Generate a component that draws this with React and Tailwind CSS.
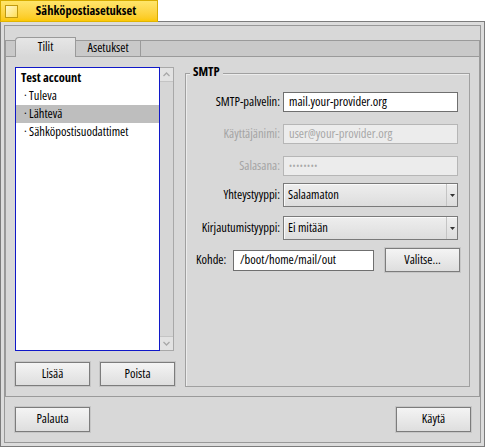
import React from "react";

function Button({ children, className = "" }) {
  return (
    <div
      className={`flex items-center justify-center h-[24px] w-[75px] border border-[#7c7c7c] bg-gradient-to-b from-[#f4f4f4] to-[#dedede] shadow-[0_0_0_1px_#c6c6c6] ${className}`}
    >
      {children}
    </div>
  );
}

function Field({ label, value, disabled, password }) {
  return (
    <div className="flex items-center h-[20px]">
      <div className={`w-[95px] pr-[1px] text-right ${disabled ? "text-[#a4a4a4]" : ""}`}>{label}</div>
      <div
        className={`ml-[2px] w-[175px] h-[20px] flex items-center pl-[5px] border ${
          disabled ? "border-[#b6b6b6] bg-[#ececec] text-[#a8a8a8]" : "border-[#6f6f6f] bg-white"
        }`}
      >
        {password ? <span className="text-[8px] tracking-[0.6px]">••••••••</span> : value}
      </div>
    </div>
  );
}

function Menu({ label, value }) {
  return (
    <div className="flex items-center h-[24px]">
      <div className="w-[95px] pr-[1px] text-right">{label}</div>
      <div className="ml-[2px] w-[175px] h-[24px] flex border border-[#7a7a7a] bg-gradient-to-b from-[#eeeeee] to-[#dddddd] shadow-[inset_1px_1px_0_#fafafa]">
        <div className="flex-1 flex items-center pl-[4px]">{value}</div>
        <div className="w-[11px] flex items-center justify-center border-l border-[#c4c4c4]">
          <svg width="5" height="3" viewBox="0 0 5 3">
            <path d="M0 0H5L2.5 3Z" fill="#333" />
          </svg>
        </div>
      </div>
    </div>
  );
}

function Chevron({ up }) {
  return (
    <svg width="7" height="5" viewBox="0 0 7 5">
      <path d={up ? "M0.5 4L3.5 1L6.5 4" : "M0.5 1L3.5 4L6.5 1"} stroke="#a8a8a8" strokeWidth="1.3" fill="none" />
    </svg>
  );
}

const items = [
  { text: "Test account", bold: true },
  { text: "· Tuleva" },
  { text: "· Lähtevä", selected: true },
  { text: "· Sähköpostisuodattimet" },
];

export default function App() {
  return (
    <div className="w-[485px] h-[447px] bg-white font-['Open_Sans',sans-serif] font-stretch-[75%] text-[12.5px] text-black leading-none">
      {/* title tab */}
      <div className="w-[158px] h-[21px] flex items-center border-l border-t border-r border-[#d8ac00] bg-gradient-to-b from-[#ffe66a] to-[#fcc800]">
        <div className="ml-[4px] w-[13px] h-[13px] border border-[#c09a10] bg-gradient-to-br from-[#fff8c8] to-[#ffde50]" />
        <div className="flex-1 text-center font-bold pr-[3px]">Sähköpostiasetukset</div>
      </div>
      {/* window frame */}
      <div className="relative h-[426px] border border-[#7c7c7c] bg-[#dcdcdc] p-[3px]">
        <div className="absolute left-[-1px] top-[-1px] w-[158px] h-[1px] bg-[#e0b400]" />
        <div className="h-full border border-[#989898] bg-[#d8d8d8] flex flex-col">
          <div className="pt-[11px] flex flex-col">
            {/* tab row */}
            <div className="flex h-[20px]">
              <div className="w-[10px] mt-[3px] h-[17px] bg-[#c9c9c9] border-t border-b border-l border-[#9a9a9a]" />
              <div className="w-[61px] h-[20px] flex items-center justify-center border-l border-t border-r border-[#9a9a9a] rounded-tl-[4px] bg-gradient-to-b from-[#e6e6e6] to-[#d8d8d8]">
                Tilit
              </div>
              <div className="w-[65px] mt-[3px] h-[17px] flex items-center justify-center bg-[#c9c9c9] border-t border-b border-r border-[#9a9a9a]">
                Asetukset
              </div>
              <div className="flex-1 mt-[3px] h-[17px] bg-[#c9c9c9] border-t border-b border-r border-[#9a9a9a]" />
            </div>
            {/* tab content */}
            <div className="h-[340px] border-l border-r border-b border-[#9a9a9a] flex pl-[9px] pt-[10px] pr-[9px]">
              <div className="w-[160px] flex flex-col">
                <div className="h-[284px] flex">
                  <div className="w-[145px] border border-[#1018c8] bg-white pt-[1px]">
                    {items.map((it) => (
                      <div
                        key={it.text}
                        className={`h-[18px] flex items-center ${it.bold ? "font-bold pl-[5px]" : "pl-[8px]"} ${
                          it.selected ? "bg-[#bebebe]" : ""
                        }`}
                      >
                        {it.text}
                      </div>
                    ))}
                  </div>
                  <div className="w-[14px] flex flex-col border-t border-b border-r border-[#a8a8a8] bg-[#d6d6d6]">
                    <div className="h-[14px] flex items-center justify-center bg-[#e2e2e2] border-b border-[#c4c4c4]">
                      <Chevron up />
                    </div>
                    <div className="flex-1" />
                    <div className="h-[14px] flex items-center justify-center bg-[#e2e2e2] border-t border-[#c4c4c4]">
                      <Chevron />
                    </div>
                  </div>
                </div>
                <div className="mt-[11px] flex justify-between">
                  <Button>Lisää</Button>
                  <Button>Poista</Button>
                </div>
              </div>
              <div className="relative ml-[10px] mt-[6px] w-[285px] h-[314px] border border-[#a0a0a0] shadow-[inset_1px_1px_0_#ececec]">
                <div className="absolute left-[4px] top-[-8px] px-[3px] bg-[#d8d8d8] font-bold">SMTP</div>
                <div className="flex flex-col pt-[18px]">
                  <Field label="SMTP-palvelin:" value="mail.your-provider.org" />
                  <div className="h-[12px]" />
                  <Field label="Käyttäjänimi:" value="user@your-provider.org" disabled />
                  <div className="h-[12px]" />
                  <Field label="Salasana:" disabled password />
                  <div className="h-[7px]" />
                  <Menu label="Yhteystyyppi:" value="Salaamaton" />
                  <div className="h-[9px]" />
                  <Menu label="Kirjautumistyyppi:" value="Ei mitään" />
                  <div className="h-[9px]" />
                  <div className="flex items-center h-[22px] pl-[10px]">
                    <div className="w-[37px]">Kohde:</div>
                    <div className="w-[141px] h-[21px] flex items-center pl-[6px] border border-[#6f6f6f] bg-white">
                      /boot/home/mail/out
                    </div>
                    <Button className="ml-[11px] h-[22px]">Valitse...</Button>
                  </div>
                </div>
              </div>
            </div>
          </div>
          {/* bottom buttons */}
          <div className="flex justify-between pt-[10px] pl-[10px] pr-[9px]">
            <Button className="h-[25px]">Palauta</Button>
            <Button className="h-[25px]">Käytä</Button>
          </div>
        </div>
      </div>
    </div>
  );
}
